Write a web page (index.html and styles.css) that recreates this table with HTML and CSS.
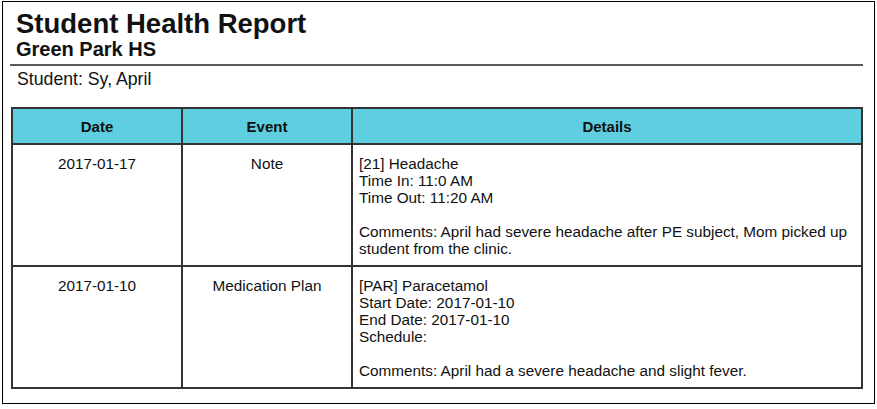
FILE: index.html
```html
<!DOCTYPE html>
<html>
<head>
<meta charset="utf-8">
<title>Student Health Report</title>
<link rel="stylesheet" href="styles.css">
</head>
<body>
<div class="page">
  <header class="report-head">
    <h1 class="title">Student Health Report</h1>
    <h2 class="school">Green Park HS</h2>
  </header>
  <div class="student">Student: Sy, April</div>
  <table class="events">
    <colgroup>
      <col class="c-date">
      <col class="c-event">
      <col class="c-details">
    </colgroup>
    <thead>
      <tr>
        <th>Date</th>
        <th>Event</th>
        <th>Details</th>
      </tr>
    </thead>
    <tbody>
      <tr>
        <td class="center">2017-01-17</td>
        <td class="center">Note</td>
        <td class="details">[21] Headache<br>Time In: 11:0 AM<br>Time Out: 11:20 AM<br><br>Comments: April had severe headache after PE subject, Mom picked up student from the clinic.</td>
      </tr>
      <tr>
        <td class="center">2017-01-10</td>
        <td class="center">Medication Plan</td>
        <td class="details">[PAR] Paracetamol<br>Start Date: 2017-01-10<br>End Date: 2017-01-10<br>Schedule:<br><br>Comments: April had a severe headache and slight fever.</td>
      </tr>
    </tbody>
  </table>
</div>
</body>
</html>
```

FILE: styles.css
```css
html, body {
  margin: 0;
  padding: 0;
  background: #fff;
}
body {
  font-family: "Liberation Sans", Arial, sans-serif;
  color: #111;
}
.page {
  box-sizing: border-box;
  margin: 1px 2px 0 2px;
  height: 403px;
  border: 1px solid #000;
  padding: 8px 10px 0 8px;
}
.report-head {
  padding-left: 6px;
  border-bottom: 2px solid #5a5a5a;
  padding-bottom: 4px;
  margin-left: -1px;
  margin-right: 1px;
}
.title {
  margin: 0;
  font-size: 27.5px;
  line-height: 28px;
  font-weight: bold;
}
.school {
  margin: 0;
  font-size: 20px;
  line-height: 22px;
  font-weight: bold;
}
.student {
  padding-left: 6px;
  margin-top: 3px;
  font-size: 17.7px;
  line-height: 20px;
}
.events {
  margin-top: 18px;
  width: 852px;
  border-collapse: collapse;
  table-layout: fixed;
  font-size: 15.3px;
  line-height: 17px;
}
.c-date { width: 170px; }
.c-event { width: 170px; }
.events th,
.events td {
  border: 2px solid #333;
}
.events th {
  background: #5dcfe0;
  height: 34px;
  padding: 0;
  font-weight: bold;
  font-size: 15px;
  text-align: center;
  vertical-align: middle;
}
.events td {
  vertical-align: top;
  padding: 10px 6px 8px 6px;
}
.events td.center {
  text-align: center;
}
.events td.details {
  text-align: left;
}
```
